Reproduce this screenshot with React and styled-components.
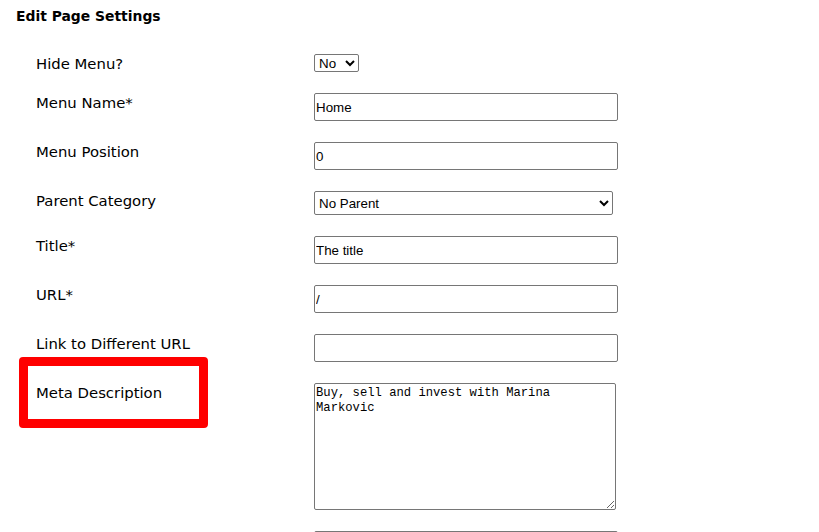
import React from "react";
import styled, { createGlobalStyle } from "styled-components";

const Global = createGlobalStyle`
  html, body { margin: 0; padding: 0; background: #fff; }
  body { font-family: "DejaVu Sans", Verdana, sans-serif; color: #000; }
`;

const Page = styled.div`
  position: relative;
  padding: 7px 0 0 16px;
  width: 819px;
  height: 532px;
  overflow: hidden;
  box-sizing: border-box;
`;

const Heading = styled.h2`
  margin: 0;
  font-family: "DejaVu Sans", Verdana, sans-serif;
  font-size: 13.9px;
  font-weight: bold;
  line-height: 18px;
`;

const Form = styled.div`
  display: grid;
  grid-template-columns: 278px 1fr;
  row-gap: 21px;
  padding: 29px 0 0 20px;
`;

const Label = styled.div`
  font-size: 14.85px;
  line-height: 16px;
  padding-top: 2px;
`;

const Field = styled.div`
  display: flex;
  align-items: flex-start;
`;

const TextInput = styled.input`
  box-sizing: border-box;
  width: 304px;
  height: 28px;
  padding: 1px 1px;
  border: 1px solid #767676;
  border-radius: 2px;
  font-family: "Liberation Sans", Arial, sans-serif;
  font-size: 13.33px;
  color: #000;
  background: #fff;
`;

const Select = styled.select`
  box-sizing: border-box;
  width: ${(p) => p.$w}px;
  height: ${(p) => p.$h}px;
  border: 1px solid #767676;
  border-radius: 2px;
  font-family: "Liberation Sans", Arial, sans-serif;
  font-size: 13.33px;
  color: #000;
  background: #fff;
`;

const TextArea = styled.textarea`
  box-sizing: border-box;
  width: 302px;
  height: 127px;
  padding: 2px 1px;
  border: 1px solid #767676;
  border-radius: 2px;
  font-family: "Liberation Mono", "DejaVu Sans Mono", monospace;
  font-size: 12.2px;
  line-height: 15px;
  color: #000;
  resize: both;
`;

const Highlight = styled.div`
  position: absolute;
  left: 19px;
  top: 357px;
  width: 189px;
  height: 71px;
  box-sizing: border-box;
  border: 9px solid #ff0000;
  border-radius: 4px;
  pointer-events: none;
`;

export default function App() {
  return (
    <>
      <Global />
      <Page>
        <Heading>Edit Page Settings</Heading>
        <Form>
          <Label>Hide Menu?</Label>
          <Field>
            <Select $w={45} $h={18} defaultValue="No">
              <option>No</option>
              <option>Yes</option>
            </Select>
          </Field>

          <Label>Menu Name*</Label>
          <Field>
            <TextInput defaultValue="Home" />
          </Field>

          <Label>Menu Position</Label>
          <Field>
            <TextInput defaultValue="0" />
          </Field>

          <Label>Parent Category</Label>
          <Field>
            <Select $w={299} $h={24} defaultValue="No Parent">
              <option>No Parent</option>
            </Select>
          </Field>

          <Label>Title*</Label>
          <Field>
            <TextInput defaultValue="The title" />
          </Field>

          <Label>URL*</Label>
          <Field>
            <TextInput defaultValue="/" />
          </Field>

          <Label>Link to Different URL</Label>
          <Field>
            <TextInput defaultValue="" />
          </Field>

          <Label>Meta Description</Label>
          <Field>
            <TextArea defaultValue="Buy, sell and invest with Marina Markovic" />
          </Field>

          <Label />
          <Field>
            <TextInput defaultValue="" />
          </Field>
        </Form>
        <Highlight />
      </Page>
    </>
  );
}
